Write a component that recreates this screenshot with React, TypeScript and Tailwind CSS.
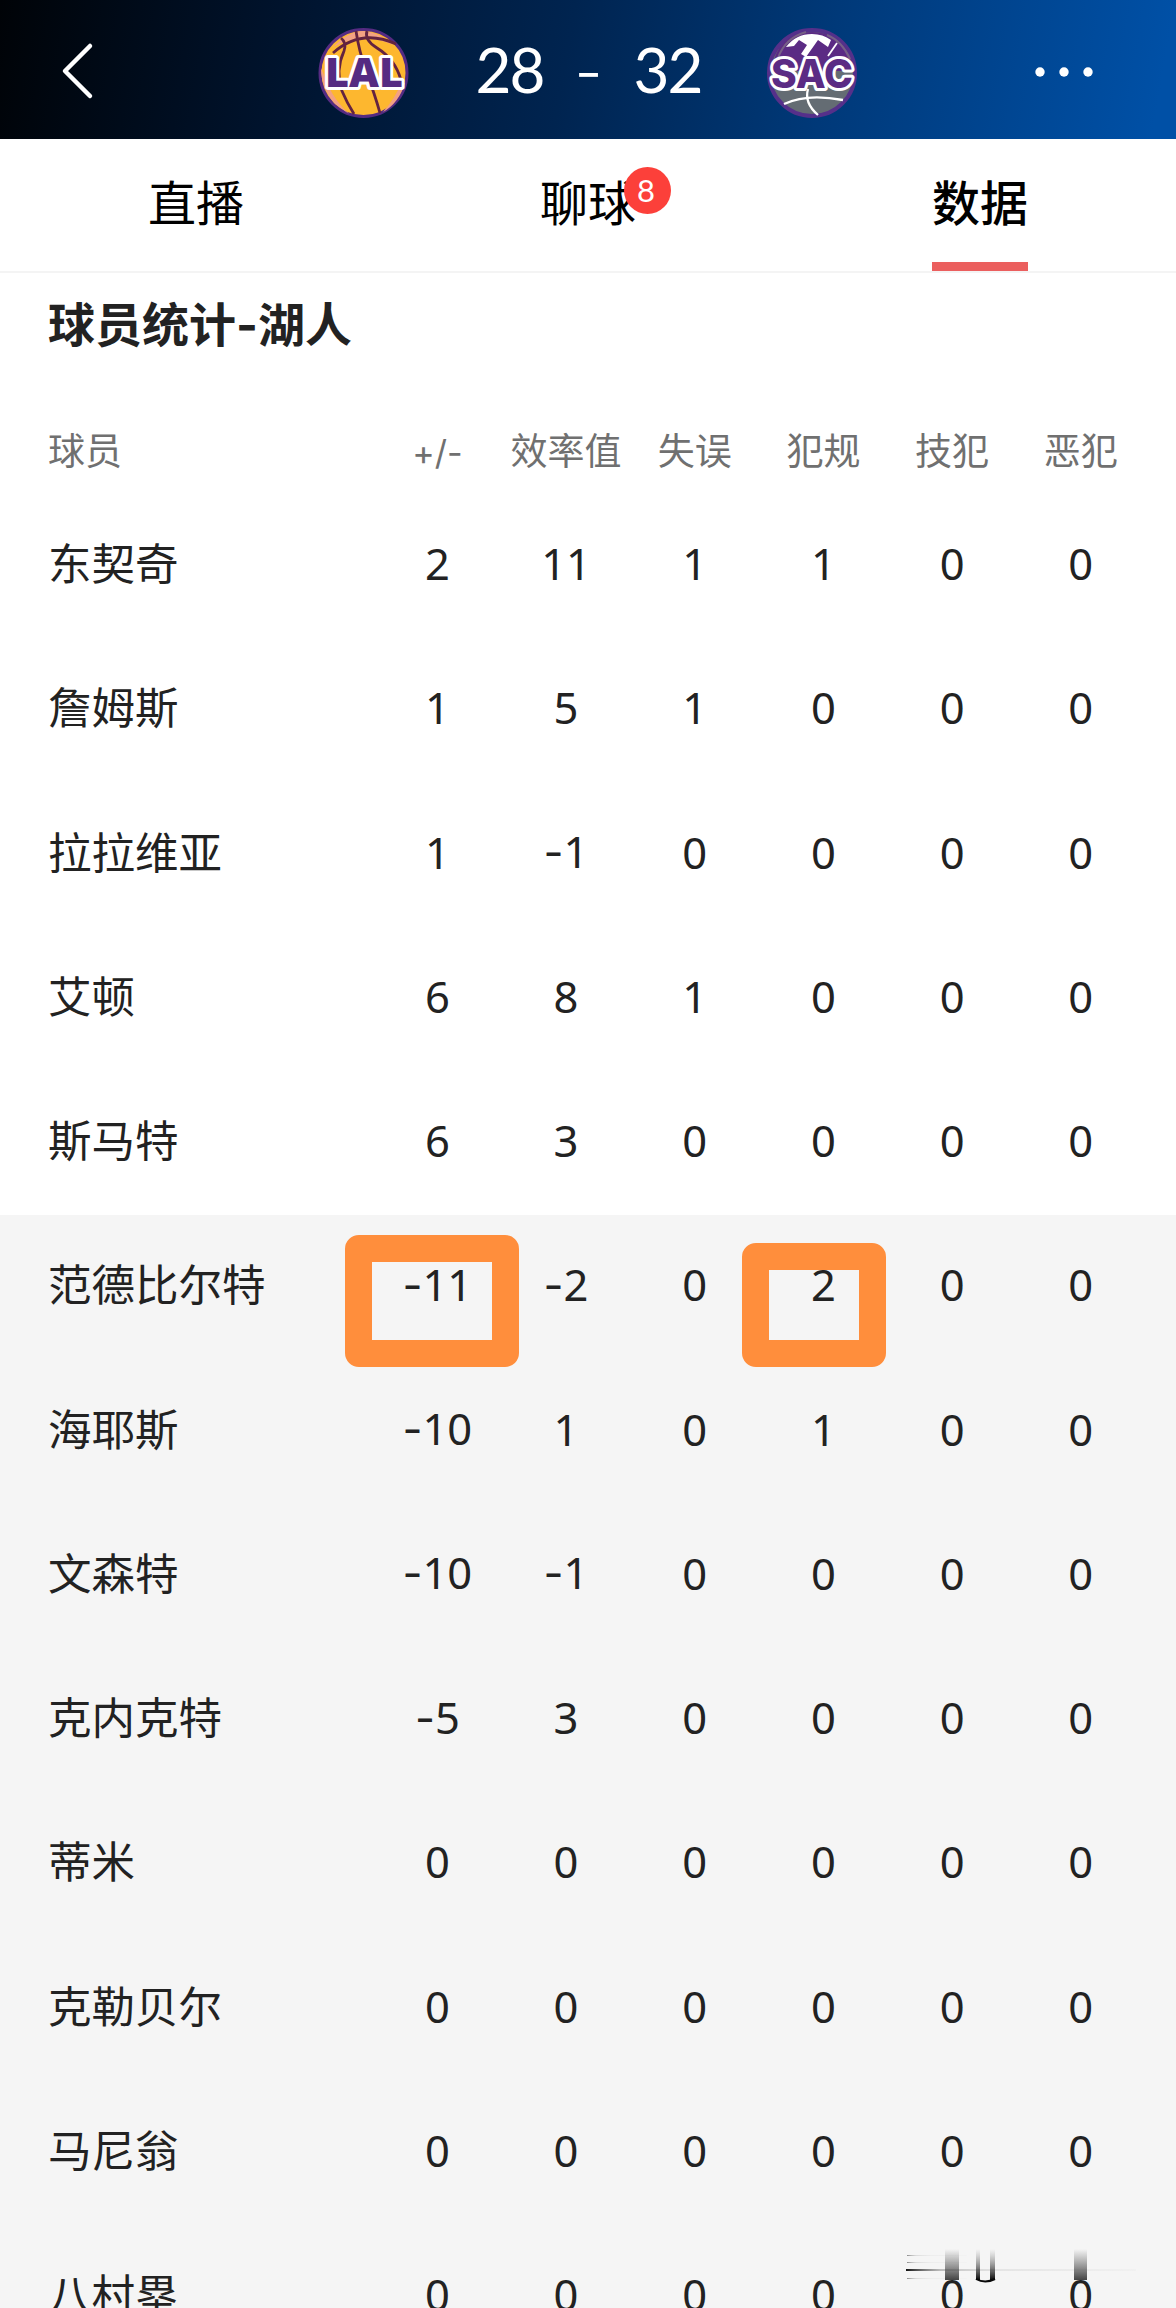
import type { ReactNode } from "react";

const columns = ["+/-", "效率值", "失误", "犯规", "技犯", "恶犯"];

const players = [
  { name: "东契奇", stats: [2, 11, 1, 1, 0, 0], starter: true },
  { name: "詹姆斯", stats: [1, 5, 1, 0, 0, 0], starter: true },
  { name: "拉拉维亚", stats: [1, -1, 0, 0, 0, 0], starter: true },
  { name: "艾顿", stats: [6, 8, 1, 0, 0, 0], starter: true },
  { name: "斯马特", stats: [6, 3, 0, 0, 0, 0], starter: true },
  { name: "范德比尔特", stats: [-11, -2, 0, 2, 0, 0], starter: false },
  { name: "海耶斯", stats: [-10, 1, 0, 1, 0, 0], starter: false },
  { name: "文森特", stats: [-10, -1, 0, 0, 0, 0], starter: false },
  { name: "克内克特", stats: [-5, 3, 0, 0, 0, 0], starter: false },
  { name: "蒂米", stats: [0, 0, 0, 0, 0, 0], starter: false },
  { name: "克勒贝尔", stats: [0, 0, 0, 0, 0, 0], starter: false },
  { name: "马尼翁", stats: [0, 0, 0, 0, 0, 0], starter: false },
  { name: "八村塁", stats: [0, 0, 0, 0, 0, 0], starter: false },
];

const LakersLogo = () => (
  <svg viewBox="0 0 100 100" className="h-[100px] w-[100px]">
    <circle cx="50.5" cy="50" r="43.5" fill="#fdb72f" stroke="#552b82" strokeWidth="3" />
    <path d="M20 24 Q36 8 50 8 Q64 8 80 22 Q50 8 20 24Z M8 45 Q8 65 22 81 L36 91 Q22 78 15 62Z M92 60 Q86 80 70 89 Q82 76 88 60Z" fill="#f3a183" />
    <g fill="none" stroke="#632340" strokeWidth="2.8">
      <path d="M20 30 Q48 5 83 21" />
      <path d="M28 15 Q34 20 31 28 Q22 48 29 68 Q34 80 41 91" />
      <path d="M43 8 Q46 28 53 48 Q62 72 67 90" />
      <path d="M54 8 Q51 17 64 25 Q82 36 88 57" />
    </g>
    <text x="51" y="64" textAnchor="middle" fontFamily="Open Sans" fontWeight="800" fontSize="40" textLength="78" lengthAdjust="spacingAndGlyphs" fill="#552b82" stroke="#fff" strokeWidth="6" strokeLinejoin="round" paintOrder="stroke">LAL</text>
  </svg>
);

const KingsLogo = () => (
  <svg viewBox="0 0 100 100" className="h-[100px] w-[100px]">
    <circle cx="50" cy="50" r="43" fill="#646c73" stroke="#55308a" strokeWidth="4" />
    <path d="M10 48 Q14 10 50 9 Q86 10 91 48Z" fill="#5b2b84" />
    <path d="M24 24 Q34 11 50 11 Q61 11 69 17 L66 24 L56 17 L44 34 L39 31 L45 22 L37 17 L32 23Z" fill="#fff" />
    <path d="M75 20 L66 33" stroke="#fff" strokeWidth="1.8" />
    <path d="M16 35 Q23 15 44 9 M65 12 Q80 18 88 36" fill="none" stroke="#766086" strokeWidth="2" />
    <g fill="none" stroke="#fff" strokeWidth="2.3">
      <path d="M22 81 Q45 70 81 77" />
      <path d="M46 66 Q42 80 56 92" />
    </g>
    <text x="50" y="65" textAnchor="middle" fontFamily="Inter" fontWeight="800" fontSize="39" textLength="82" lengthAdjust="spacingAndGlyphs" fill="#5b2b84" stroke="#fff" strokeWidth="6" strokeLinejoin="round" paintOrder="stroke">SAC</text>
  </svg>
);

const Header = () => (
  <header className="flex h-[139px] shrink-0 items-center bg-[linear-gradient(100deg,#000307_0%,#00142f_25%,#002450_48%,#003979_70%,#0050a6_98%)] pt-[7px] text-white">
    <svg viewBox="0 0 40 60" className="mb-[2px] ml-[56px] h-[60px] w-[40px]" fill="none" stroke="#fff" strokeWidth="4.5" strokeLinecap="round" strokeLinejoin="round">
      <path d="M34 4 L9 29 L34 54" />
    </svg>
    <div className="ml-[217px] flex h-[100px] items-center">
      <LakersLogo />
      <div className="flex w-[349px] items-center justify-center pb-[8px] pl-[2px] font-['Lato'] text-[62px] leading-[90px]">
        <span className="w-[72px] text-center tracking-[-2px]">28</span>
        <span className="w-[86px] pt-[4px] text-center">
          <span className="font-['Inter'] font-light">-</span>
        </span>
        <span className="w-[72px] text-center tracking-[-2px]">32</span>
      </div>
      <KingsLogo />
    </div>
    <svg viewBox="0 0 60 12" className="ml-[172px] h-[12px] w-[60px]" fill="#fff">
      <circle cx="6" cy="5" r="4.7" />
      <circle cx="30" cy="5" r="4.7" />
      <circle cx="54" cy="5" r="4.7" />
    </svg>
  </header>
);

const Tabs = () => (
  <nav className="grid h-[134px] shrink-0 grid-cols-3 border-b-2 border-[#f4f4f4] text-[48px] leading-[127px] text-black">
    <div className="text-center">直播</div>
    <div className="text-center">
      <span className="relative inline-block">
        聊球
        <span className="absolute top-[28px] left-[84px] h-[47px] w-[47px] rounded-full bg-[#fc403a] pr-[3px] text-center font-['Lato'] text-[31px] leading-[47px] text-white">
          8
        </span>
      </span>
    </div>
    <div className="flex justify-center font-medium">
      <span className="h-[132px] w-[96px] border-b-[9px] border-[#eb5f5e]">数据</span>
    </div>
  </nav>
);

const Value = ({ children }: { children: number }) => (
  <>
    {children < 0 && <span className="font-['Inter']">-</span>}
    {Math.abs(children)}
  </>
);

const Row = ({ children, className }: { children: ReactNode; className: string }) => (
  <div className={`grid shrink-0 grid-cols-[325px_repeat(6,128.7px)] items-center pl-12 ${className}`}>{children}</div>
);

// Smeared strip in the bottom right corner
const Smudge = () => (
  <svg viewBox="0 0 270 42" className="absolute right-0 bottom-[20px] h-[42px] w-[270px]">
    <defs>
      <linearGradient id="block" x2="0" y2="1">
        <stop offset="0" stopColor="#555" stopOpacity="0" />
        <stop offset="1" stopColor="#444" />
      </linearGradient>
      <linearGradient id="dark" x2="0" y2="1">
        <stop offset="0" stopColor="#777" stopOpacity="0" />
        <stop offset="1" stopColor="#080808" />
      </linearGradient>
      <linearGradient id="line">
        <stop offset="0" stopColor="#111" />
        <stop offset="0.15" stopColor="#999" stopOpacity="0.6" />
        <stop offset="0.4" stopColor="#ccc" stopOpacity="0.4" />
        <stop offset="1" stopColor="#ccc" stopOpacity="0.1" />
      </linearGradient>
    </defs>
    <rect x="0" y="23" width="230" height="2" fill="url(#line)" />
    <g fill="url(#line)" opacity="0.45">
      <rect x="1" y="9" width="60" height="1" />
      <rect x="1" y="16" width="60" height="1" />
      <rect x="1" y="32" width="60" height="1" />
    </g>
    <rect x="39" y="3" width="14" height="31" fill="url(#block)" />
    <rect x="70" y="3" width="4" height="31" fill="url(#dark)" />
    <rect x="84" y="3" width="5" height="31" fill="url(#dark)" />
    <path d="M70 33 Q79 38 89 33" fill="none" stroke="#080808" strokeWidth="2" />
    <rect x="168" y="3" width="13" height="31" fill="url(#block)" />
  </svg>
);

export default function App() {
  return (
    <div className="relative flex h-[2308px] w-[1176px] flex-col overflow-hidden bg-white font-['Noto_Sans','Noto_Sans_CJK_SC',sans-serif] text-[#222]">
      <Header />
      <Tabs />
      <h2 className="h-[134px] shrink-0 pl-12 text-[47px] leading-[102px] font-bold">
        球员统计<span className="font-['Inter']">-</span>湖人
      </h2>
      <Row className="h-[87px] text-[37px] text-[#707070]">
        <div>球员</div>
        {columns.map((column) => (
          <div key={column} className="text-center whitespace-nowrap">
            {column === "+/-" ? <span className="font-['Inter'] text-[34px]">+/-</span> : column}
          </div>
        ))}
      </Row>
      {players.map((player) => (
        <Row
          key={player.name}
          className={player.starter ? "h-[144.27px] bg-white pb-[5px] text-[43.5px]" : "h-[144.27px] bg-[#f5f5f5] pb-[5px] text-[43.5px]"}
        >
          <div>{player.name}</div>
          {player.stats.map((stat, i) => (
            <div key={i} className="relative z-10 text-center">
              <Value>{stat}</Value>
            </div>
          ))}
        </Row>
      ))}
      {/* highlighted cells */}
      <div className="absolute top-[1235px] left-[345px] h-[132px] w-[174px] rounded-[14px] border-27 border-[#ff8e3c]" />
      <div className="absolute top-[1243px] left-[742px] h-[124px] w-[144px] rounded-[14px] border-27 border-[#ff8e3c]" />
      <Smudge />
    </div>
  );
}
